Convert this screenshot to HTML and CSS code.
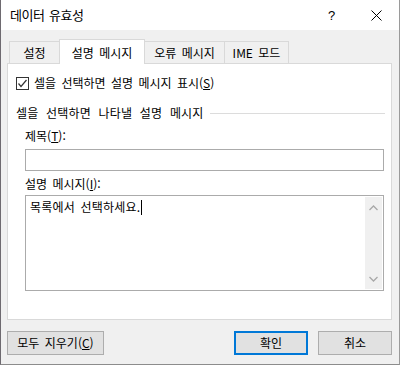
FILE: index.html
```html
<!DOCTYPE html>
<html lang="ko">
<head>
  <meta charset="UTF-8">
  <title>데이터 유효성</title>
  <link rel="stylesheet" href="styles.css">
</head>
<body>

<div class="dialog">
  <div class="titlebar">
    <span class="title">데이터 유효성</span>
    <span class="help">?</span>
    <span class="close">
      <svg width="11" height="11" viewBox="0 0 11 11"><path d="M0.5 0.5 L10.5 10.5 M10.5 0.5 L0.5 10.5" stroke="#000" stroke-width="1" fill="none"/></svg>
    </span>
  </div>

  <div class="content">
    <div class="tabs">
      <div class="tab tab-1">설정</div>
      <div class="tab tab-2 active">설명 메시지</div>
      <div class="tab tab-3">오류 메시지</div>
      <div class="tab tab-4">IME 모드</div>
    </div>

    <div class="panel">
      <label class="check">
        <span class="box">
          <svg width="11" height="11" viewBox="0 0 11 11"><path d="M1.5 5.5 L4 8.5 L9.5 2" stroke="#333" stroke-width="1.2" fill="none"/></svg>
        </span>
        셀을 선택하면 설명 메시지 표시(<u>S</u>)
      </label>

      <div class="group-title">
        <span>셀을 선택하면 나타낼 설명 메시지</span>
        <span class="rule"></span>
      </div>

      <div class="field-label">제목(<u>T</u>):</div>
      <div class="input"></div>

      <div class="field-label">설명 메시지(<u>I</u>):</div>
      <div class="textarea">
        <div class="text">목록에서 선택하세요.<span class="caret"></span></div>
        <div class="scrollbar">
          <svg width="9" height="6" viewBox="0 0 9 6"><path d="M0.5 5 L4.5 1 L8.5 5" stroke="#a8a8a8" stroke-width="1.3" fill="none"/></svg>
          <svg width="9" height="6" viewBox="0 0 9 6"><path d="M0.5 1 L4.5 5 L8.5 1" stroke="#a8a8a8" stroke-width="1.3" fill="none"/></svg>
        </div>
      </div>
    </div>

    <div class="buttons">
      <button class="btn btn-clear">모두 지우기(<u>C</u>)</button>
      <span class="spacer"></span>
      <button class="btn btn-ok">확인</button>
      <button class="btn btn-cancel">취소</button>
    </div>
  </div>
</div>

</body>
</html>
```

FILE: styles.css
```css
* {
  box-sizing: border-box;
}

body {
  margin: 0;
  padding: 0;
  font-family: "Noto Sans CJK KR", "Noto Sans", sans-serif;
  font-size: 12px;
  color: #000;
  background-color: #f0f0f0;
}

.dialog {
  width: 400px;
  height: 365px;
  background-color: #f0f0f0;
  border-left: 1px solid #6e6a70;
  border-right: 1px solid #9a9a9a;
  border-bottom: 1px solid #8c8c8c;
  display: flex;
  flex-direction: column;
}

/* 제목 표시줄 */
.titlebar {
  height: 30px;
  background-color: #fff;
  display: flex;
  align-items: center;
  flex-shrink: 0;
}

.title {
  padding-left: 9px;
  font-size: 13px;
  letter-spacing: -0.4px;
  word-spacing: 1px;
  line-height: 16px;
  flex: 1;
}

.help {
  font-family: "Liberation Sans", sans-serif;
  font-size: 13px;
  width: 43px;
}

.close {
  width: 28px;
  display: flex;
  align-items: center;
}

/* 본문 */
.content {
  padding: 9px 7px 0 6px;
  flex: 1;
}

.tabs {
  display: flex;
  align-items: flex-end;
  height: 24px;
  padding-left: 2px;
}

.tab {
  height: 22px;
  border: 1px solid #d9d9d9;
  border-bottom: none;
  margin-left: -1px;
  background-color: #f0f0f0;
  display: flex;
  align-items: center;
  justify-content: center;
  word-spacing: 2px;
  line-height: 16px;
}

.tab:first-child {
  margin-left: 0;
}

.tab-1 { width: 51px; }
.tab-2 { width: 86px; }
.tab-3 { width: 81px; }
.tab-4 { width: 65px; }

.tab.active {
  height: 25px;
  margin-bottom: -1px;
  background-color: #fff;
  position: relative;
  z-index: 1;
  padding-top: 1px;
}

.panel {
  height: 257px;
  background-color: #fff;
  border: 1px solid #d9d9d9;
  padding: 0 6px 0 8px;
  word-spacing: 2px;
  line-height: 16px;
}

.check {
  display: flex;
  align-items: center;
  margin-top: 11px;
  height: 16px;
}

.box {
  width: 13px;
  height: 13px;
  border: 1px solid #333;
  margin-right: 5px;
  display: flex;
  align-items: center;
  justify-content: center;
}

.group-title {
  display: flex;
  align-items: center;
  margin-top: 14px;
  height: 16px;
  letter-spacing: 0.2px;
  word-spacing: 4px;
}

.rule {
  flex: 1;
  height: 1px;
  background-color: #dcdcdc;
  margin-left: 6px;
}

.field-label {
  margin-left: 9px;
  height: 16px;
  margin-top: 7px;
}

.input {
  margin-left: 9px;
  margin-top: 5px;
  width: 359px;
  height: 22px;
  border: 1px solid #ababab;
}

.input + .field-label {
  margin-top: 5px;
}

.textarea {
  margin-left: 9px;
  margin-top: 3px;
  width: 359px;
  height: 96px;
  border: 1px solid #ababab;
  padding: 1px;
  display: flex;
}

.text {
  flex: 1;
  padding: 2px 0 0 3px;
  letter-spacing: 0.2px;
}

.caret {
  display: inline-block;
  width: 1px;
  height: 15px;
  background-color: #000;
  vertical-align: -3px;
  margin-left: 1px;
}

.scrollbar {
  width: 17px;
  background-color: #f0f0f0;
  display: flex;
  flex-direction: column;
  justify-content: space-between;
  align-items: center;
  padding: 8px 0 7px;
}

.scrollbar svg {
  display: block;
}

/* 하단 버튼 */
.buttons {
  display: flex;
  margin-top: 11px;
}

.spacer {
  flex: 1;
}

.btn {
  height: 24px;
  font-family: inherit;
  font-size: 12px;
  word-spacing: 2px;
  line-height: 16px;
  background-color: #e1e1e1;
  border: 1px solid #adadad;
  padding: 0;
  color: #000;
}

.btn-clear {
  width: 97px;
}

.btn-ok {
  width: 74px;
  border: 2px solid #0078d7;
}

.btn-cancel {
  width: 74px;
  margin-left: 10px;
}
```
